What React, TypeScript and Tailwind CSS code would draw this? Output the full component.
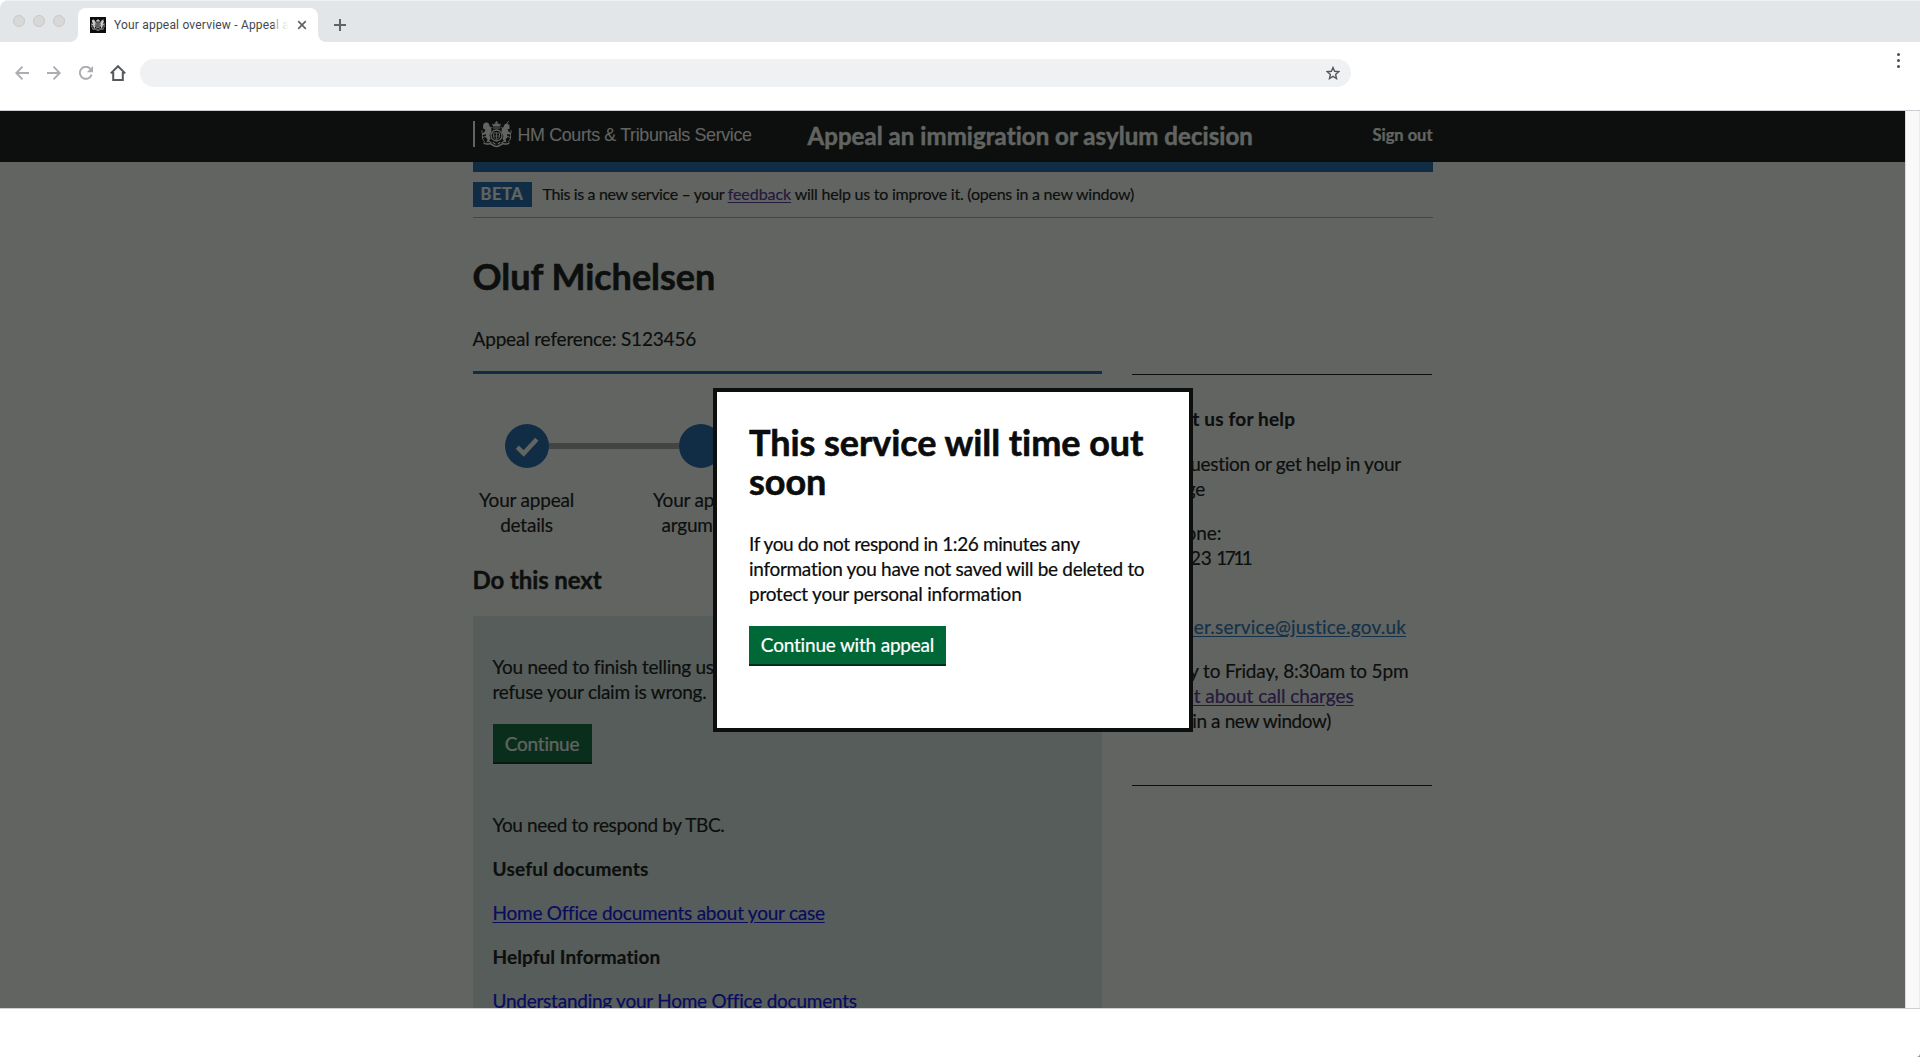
import React from 'react';

function RoyalArms({ className }: { className: string }) {
  return (
    <svg viewBox="0 0 62 52" className={className} fill="none" stroke="currentColor" strokeLinecap="round" strokeLinejoin="round">
      {/* crown */}
      <path d="M24 10h14l2-6-4 2-2-3-3 2-3-2-2 3-4-2z" fill="currentColor" stroke="none" />
      <path d="M31 0v5M29 2h4" strokeWidth="1.6" />
      <path d="M25 13h12" strokeWidth="2.4" />
      {/* garter and shield */}
      <circle cx="31" cy="28" r="11" strokeWidth="2.6" />
      <path d="M25 23h12v6c0 4-3 6-6 7-3-1-6-3-6-7z" strokeWidth="1.8" />
      <path d="M31 23v12M25 29h12" strokeWidth="1.6" />
      {/* lion */}
      <path d="M5 5c3-4 9-4 11 0l1 4c4 3 5 8 3 13l-3 6 2 6-3 6-5 2 2-6-4-5 1-6-5 2-3-3 5-3 2-5-4-1-1-4z" fill="currentColor" stroke="none" />
      <path d="M7 40c-4-3-5-8-4-12s-3-7-1-10M9 30l-6 2M18 14l4-2" strokeWidth="2" />
      {/* unicorn */}
      <path d="M57 8c-2-4-7-5-10-2l-2 5c-4 3-5 8-3 12l3 6-2 5 3 6 5 2-2-6 4-5-1-6 5 1 3-3-5-3-2-5 4 0z" fill="currentColor" stroke="none" />
      <path d="M51 5l4-5M55 40c4-3 5-8 4-12s3-7 1-10M53 30l6 2M44 14l-4-2" strokeWidth="2" />
      {/* motto scroll */}
      <path d="M6 43c5 5 10 0 14 2s7 5 11 5 7-3 11-5 9 3 14-2" strokeWidth="3" />
      <path d="M14 39l6 3M48 39l-6 3M24 42l4 3M38 42l-4 3" strokeWidth="2.2" />
    </svg>
  );
}

function BrowserChrome() {
  return (
    <div className="h-[111px] border-b border-[#c9ccd0] bg-white text-[#5f6368]">
      <div className="flex h-[42px] items-end rounded-tl-lg border-t border-[#eff1f2] bg-[#e2e6e9]">
        <div className="mb-[15px] ml-[13px] flex w-[65px] gap-2">
          <span className="size-3 rounded-full border border-[#c8c8c8] bg-[#d8d8d8]" />
          <span className="size-3 rounded-full border border-[#c8c8c8] bg-[#d8d8d8]" />
          <span className="size-3 rounded-full border border-[#c8c8c8] bg-[#d8d8d8]" />
        </div>
        <div className="relative flex h-[34px] w-[240px] items-center rounded-t-lg bg-white pl-3">
          <svg className="absolute bottom-0 -left-2 size-2" viewBox="0 0 8 8">
            <path d="M8 0v8H0a8 8 0 0 0 8-8z" fill="#fff" />
          </svg>
          <svg className="absolute -right-2 bottom-0 size-2" viewBox="0 0 8 8">
            <path d="M0 0v8h8a8 8 0 0 1-8-8z" fill="#fff" />
          </svg>
          <span className="flex size-4 items-center justify-center bg-[#0b0c0c] text-[#c9c9c9]">
            <RoyalArms className="h-3 w-3.5" />
          </span>
          <span className="relative ml-2 w-[176px] overflow-hidden whitespace-nowrap font-['Roboto',sans-serif] text-[12px] leading-4 tracking-[0.19px] text-[#45494d]">
            Your appeal overview - Appeal an immigration
            <span className="absolute inset-y-0 right-0 w-4 bg-linear-to-r from-white/40 to-white to-90%" />
          </span>
          <svg className="ml-[7px] size-[10px]" viewBox="0 0 10 10" stroke="currentColor" strokeWidth="1.7">
            <path d="M1.2 1.2l7.6 7.6M8.8 1.2L1.2 8.8" />
          </svg>
        </div>
        <svg className="mb-[11px] ml-4 size-3" viewBox="0 0 12 12" stroke="currentColor" strokeWidth="2">
          <path d="M6 0v12M0 6h12" />
        </svg>
      </div>
      <div className="flex h-[62px] items-center pl-[15px]">
        <svg className="size-[14px] text-[#abadb1]" viewBox="0 0 14 14" fill="none" stroke="currentColor" strokeWidth="1.9">
          <path d="M14 7H1.5M7.5 .7L1.3 7l6.2 6.3" />
        </svg>
        <svg className="ml-[18px] size-[14px] text-[#abadb1]" viewBox="0 0 14 14" fill="none" stroke="currentColor" strokeWidth="1.9">
          <path d="M0 7h12.5M6.5 .7L12.7 7l-6.2 6.3" />
        </svg>
        <svg className="ml-[18px] size-[14px] text-[#abadb1]" viewBox="0 0 14 14" fill="none" stroke="currentColor" strokeWidth="1.9">
          <path d="M12.6 8.6A6 6 0 1 1 11.4 2.8" />
          <path d="M14 0v6.2H7.8z" fill="currentColor" stroke="none" />
        </svg>
        <svg className="ml-[17px] h-4 w-4 text-[#55585c]" viewBox="0 0 16 16" fill="none" stroke="currentColor" strokeWidth="2">
          <path d="M.8 8.4L8 1.2l7.2 7.2M3.2 7v8h9.6V7" />
        </svg>
        <div className="ml-[14px] flex h-7 w-[1211px] items-center justify-end rounded-full bg-[#eff1f3] pr-[11px]">
          <svg className="size-[14px] text-[#55585c]" viewBox="0 0 14 14" fill="none" stroke="currentColor" strokeWidth="1.4">
            <path d="M7 1.5l1.6 3.8 4.1.4-3.1 2.7.9 4.1L7 10.3l-3.5 2.2.9-4.1L1.3 5.7l4.1-.4z" />
          </svg>
        </div>
        <div className="mt-[-26px] mr-[20px] ml-auto flex flex-col gap-[3px]">
          <span className="size-[3px] rounded-full bg-[#4a4d51]" />
          <span className="size-[3px] rounded-full bg-[#4a4d51]" />
          <span className="size-[3px] rounded-full bg-[#4a4d51]" />
        </div>
      </div>
    </div>
  );
}

function Timeline() {
  return (
    <div className="mt-[50px] w-[630px] whitespace-nowrap">
      <div className="flex items-center px-8">
        <span className="flex size-11 items-center justify-center rounded-full bg-[#1462ab]">
          <svg className="mt-px size-6" viewBox="0 0 24 24" fill="none" stroke="#fff" strokeWidth="4.6">
            <path d="M2.3 12.2l6.4 6.3L21.8 4.2" />
          </svg>
        </span>
        <span className="h-1.5 flex-1 bg-[#a3a5a5]" />
        <span className="size-11 rounded-full bg-[#1462ab]" />
        <span className="h-1.5 flex-1 bg-[#a3a5a5]" />
        <span className="size-11 rounded-full bg-[#a3a5a5]" />
        <span className="h-1.5 flex-1 bg-[#a3a5a5]" />
        <span className="size-11 rounded-full bg-[#a3a5a5]" />
      </div>
      <div className="mt-[19px] flex justify-between text-center tracking-[-0.2px]">
        <p className="w-[108px]">Your appeal<br />details</p>
        <p className="w-[108px]">Your appeal<br />argument</p>
        <p className="w-[108px]">Your hearing<br />details</p>
        <p className="w-[108px]">Your appeal<br />decision</p>
      </div>
    </div>
  );
}

function Sidebar() {
  return (
    <aside className="mt-[3px] w-[300px] self-start border-y border-[#0b0c0c] pt-[31px] pb-[52px] whitespace-nowrap">
      <h2 className="font-bold tracking-[0.18px]">Contact us for help</h2>
      <p className="mt-5 tracking-[-0.27px]">Ask a question or get help in your<br /><span className="tracking-[-0.05px]">language</span></p>
      <p className="mt-[19px] tracking-[-0.1px]">Telephone:<br /><span className="tracking-[-0.25px]">0300 123 </span><span className="tracking-[-2.5px]">1711</span></p>
      <p className="mt-[19px]">
        Email:<br />
        <a className="tracking-[0.2px] text-[#1d70b8] underline underline-offset-2">customer.service@justice.gov.uk</a>
      </p>
      <p className="mt-[19px]">
        <span className="tracking-[-0.17px]">Monday to Friday, 8:30am to 5pm</span><br />
        <a className="tracking-[-0.06px] text-[#4c2c92] underline underline-offset-2">Find out about call charges</a><br />
        <span className="tracking-[0.15px]">(opens </span><span className="tracking-[-0.38px]">in a new window)</span>
      </p>
    </aside>
  );
}

function ServicePage() {
  return (
    <div className="h-full bg-white">
      <header className="h-[51px] bg-[#0b0c0c] text-white">
        <div className="mx-auto flex h-full w-[960px] items-start whitespace-nowrap">
          <span className="mt-[10px] h-[26px] w-[2px] bg-white" />
          <RoyalArms className="mt-[10px] ml-[6px] h-[27px] w-[31px]" />
          <span className="mt-[12px] ml-[6px] w-[290px] font-['Liberation_Sans',sans-serif] text-[17.9px] leading-[25px] tracking-[-0.36px] [-webkit-text-stroke:0px]">HM Courts &amp; Tribunals Service</span>
          <span className="mt-[10px] text-[24px] leading-[30px] font-bold tracking-[0.06px] [-webkit-text-stroke:0.4px]">Appeal an immigration or asylum decision</span>
          <span className="mt-[14px] ml-auto text-[16.5px] leading-5 font-bold tracking-[-0.02px]">Sign out</span>
        </div>
      </header>
      <div className="mx-auto w-[960px]">
        <div className="h-[10px] bg-[#1462ab]" />
        <div className="flex items-start border-b border-[#a3a5a5] py-[10px] text-[16px] leading-6 whitespace-nowrap">
          <strong className="mr-[11px] h-[25px] w-[59px] bg-[#1462ab] pl-2 text-[16.5px] leading-[25px] tracking-[0.55px] text-white">BETA</strong>
          <span className="tracking-[-0.36px]">
            This is a new service – your{' '}
            <a className="tracking-[-0.05px] text-[#4c2c92] underline underline-offset-2">feedback</a>
            <span className="tracking-[-0.24px]"> will help us to improve it. (opens in a new window)</span>
          </span>
        </div>
        <h1 className="mt-[38px] text-[36px] leading-10 font-bold tracking-[-0.02px] [-webkit-text-stroke:0.6px]">Oluf Michelsen</h1>
        <p className="mt-[30px] tracking-[-0.17px]">Appeal reference: S123456</p>
        <div className="mt-5 flex gap-[30px]">
          <main className="w-[629px] shrink-0 border-t-3 border-[#1462ab]">
            <Timeline />
            <h2 className="mt-7 text-[24px] leading-[30px] font-bold tracking-[-0.1px] [-webkit-text-stroke:0.4px]">Do this next</h2>
            <section className="mt-[21px] h-[500px] bg-[#deeaea] px-5 pt-[38px]">
              <p className="tracking-[-0.27px]">
                You need to finish telling us why you think the Home Office decision to<br />
                refuse your claim is wrong.
              </p>
              <button className="mt-5 block h-10 w-[99px] border-b-2 border-[#002d18] bg-[#006837] text-center leading-[25px] tracking-[-0.25px] text-white">Continue</button>
              <p className="mt-12 tracking-[-0.36px]">You need to respond by TBC.</p>
              <h3 className="mt-[19px] font-bold tracking-[0.22px]">Useful documents</h3>
              <p className="mt-[19px] tracking-[-0.24px]"><a className="text-[#0000ee] underline underline-offset-2">Home Office documents about your case</a></p>
              <h3 className="mt-[19px] font-bold tracking-[0.08px]">Helpful Information</h3>
              <p className="mt-[19px] tracking-[-0.24px]"><a className="text-[#0000ee] underline underline-offset-2">Understanding your Home Office documents</a></p>
            </section>
          </main>
          <Sidebar />
        </div>
      </div>
    </div>
  );
}

function TimeoutDialog() {
  return (
    <div role="dialog" className="absolute top-[277px] left-[713px] h-[344px] w-[480px] border-4 border-[#0d0f0e] bg-white pt-[31px] pl-[32px] whitespace-nowrap">
      <h2 className="text-[36px] leading-[39.4px] font-bold tracking-[-0.06px] [-webkit-text-stroke:0.6px]">This service will time out<br />soon</h2>
      <p className="mt-[29px] tracking-[-0.3px]">
        <span className="tracking-[-0.39px]">If you do not respond in 1:26 minutes any</span><br />
        information you have not saved will be deleted to<br />
        <span className="tracking-[-0.22px]">protect your personal information</span>
      </p>
      <button className="mt-5 block h-10 w-[197px] border-b-2 border-[#002d18] bg-[#006837] text-center leading-[25px] tracking-[-0.2px] text-white">Continue with appeal</button>
    </div>
  );
}

export default function App() {
  return (
    <div className="relative h-[1057px] w-[1920px] overflow-hidden bg-white">
      <BrowserChrome />
      <div className="flex h-[898px] border-b border-[#cfcfcf]">
        <div className="relative h-[897px] w-[1905px] overflow-hidden font-['Lato',sans-serif] text-[19px] leading-[25px] text-[#0b0c0c] [-webkit-text-stroke:0.2px]">
          <ServicePage />
          <div className="absolute inset-0 bg-[rgba(14,17,14,0.65)]" />
          <TimeoutDialog />
        </div>
        <div className="w-[15px] border-x border-l-[#dcdcdc] border-r-[#ececec] bg-[#f9f9f9]" />
      </div>
      <svg className="absolute right-0 bottom-0 size-1" viewBox="0 0 4 4">
        <path d="M4 0v4H0a4 4 0 0 0 4-4z" fill="#8c8c8c" />
      </svg>
    </div>
  );
}
